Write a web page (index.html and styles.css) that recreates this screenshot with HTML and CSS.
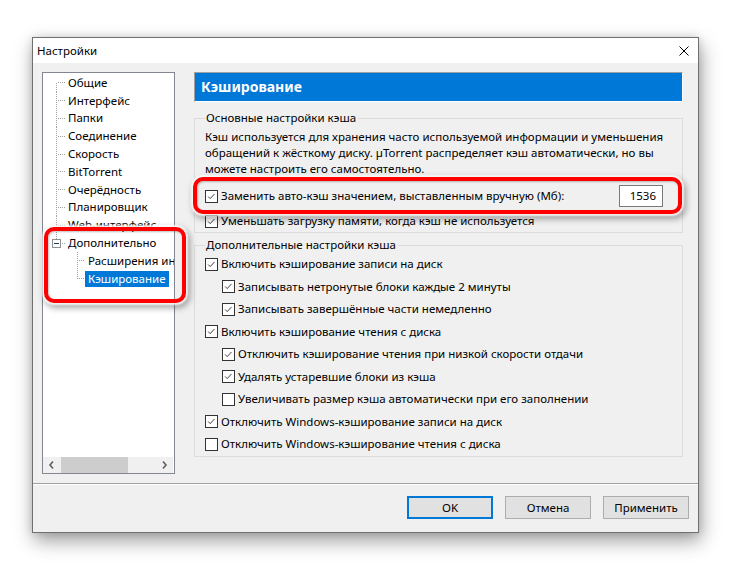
FILE: index.html
```html
<!DOCTYPE html>
<html lang="ru">
<head>
<meta charset="utf-8">
<title>Настройки</title>
<link rel="stylesheet" href="styles.css">
</head>
<body>
<div class="stage">
  <div class="dialog">
    <div class="titlebar">
      <span class="title">Настройки</span>
      <svg class="close" viewBox="0 0 10 10" width="10" height="10"><path d="M0.5 0.5 9.5 9.5 M9.5 0.5 0.5 9.5"/></svg>
    </div>
    <div class="main">
      <div class="tree">
        <div class="tree-list">
          <div class="node first"><span class="guide"></span><span class="label">Общие</span></div>
          <div class="node"><span class="guide"></span><span class="label">Интерфейс</span></div>
          <div class="node"><span class="guide"></span><span class="label">Папки</span></div>
          <div class="node"><span class="guide"></span><span class="label">Соединение</span></div>
          <div class="node"><span class="guide"></span><span class="label">Скорость</span></div>
          <div class="node"><span class="guide"></span><span class="label">BitTorrent</span></div>
          <div class="node"><span class="guide"></span><span class="label">Очерёдность</span></div>
          <div class="node"><span class="guide"></span><span class="label">Планировщик</span></div>
          <div class="node"><span class="guide"></span><span class="label">Web-интерфейс</span></div>
          <div class="node last"><span class="guide"><span class="minus"></span></span><span class="label">Дополнительно</span></div>
          <div class="node child"><span class="guide"></span><span class="label">Расширения интерфейса</span></div>
          <div class="node child lastchild"><span class="guide"></span><span class="label sel">Кэширование</span></div>
        </div>
        <div class="hscroll">
          <svg class="arrow" viewBox="0 0 17 16" width="17" height="16"><path d="M10 4.5 7 8 10 11.5"/></svg>
          <span class="thumb"></span>
          <span class="track-fill"></span>
          <svg class="arrow" viewBox="0 0 17 16" width="17" height="16"><path d="M7 4.5 10 8 7 11.5"/></svg>
        </div>
      </div>
      <div class="panel">
        <div class="panel-head">Кэширование</div>
        <fieldset class="group g1">
          <legend>Основные настройки кэша</legend>
          <p class="desc">Кэш используется для хранения часто используемой информации и уменьшения<br>обращений к жёсткому диску. µTorrent распределяет кэш автоматически, но вы<br>можете настроить его самостоятельно.</p>
          <div class="row r-main"><span class="cb on"><svg viewBox="0 0 13 13"><path d="M2.5 6.5 5 9 10 3.5"/></svg></span><span>Заменить авто-кэш значением, выставленным вручную (Мб):</span><span class="num">1536</span></div>
          <div class="row r-second"><span class="cb on"><svg viewBox="0 0 13 13"><path d="M2.5 6.5 5 9 10 3.5"/></svg></span><span>Уменьшать загрузку памяти, когда кэш не используется</span></div>
        </fieldset>
        <fieldset class="group g2">
          <legend>Дополнительные настройки кэша</legend>
          <div class="row"><span class="cb on"><svg viewBox="0 0 13 13"><path d="M2.5 6.5 5 9 10 3.5"/></svg></span><span>Включить кэширование записи на диск</span></div>
          <div class="row sub"><span class="cb on"><svg viewBox="0 0 13 13"><path d="M2.5 6.5 5 9 10 3.5"/></svg></span><span>Записывать нетронутые блоки каждые 2 минуты</span></div>
          <div class="row sub"><span class="cb on"><svg viewBox="0 0 13 13"><path d="M2.5 6.5 5 9 10 3.5"/></svg></span><span>Записывать завершённые части немедленно</span></div>
          <div class="row"><span class="cb on"><svg viewBox="0 0 13 13"><path d="M2.5 6.5 5 9 10 3.5"/></svg></span><span>Включить кэширование чтения с диска</span></div>
          <div class="row sub"><span class="cb on"><svg viewBox="0 0 13 13"><path d="M2.5 6.5 5 9 10 3.5"/></svg></span><span>Отключить кэширование чтения при низкой скорости отдачи</span></div>
          <div class="row sub"><span class="cb on"><svg viewBox="0 0 13 13"><path d="M2.5 6.5 5 9 10 3.5"/></svg></span><span>Удалять устаревшие блоки из кэша</span></div>
          <div class="row sub"><span class="cb"></span><span>Увеличивать размер кэша автоматически при его заполнении</span></div>
          <div class="row"><span class="cb on"><svg viewBox="0 0 13 13"><path d="M2.5 6.5 5 9 10 3.5"/></svg></span><span>Отключить Windows-кэширование записи на диск</span></div>
          <div class="row"><span class="cb"></span><span>Отключить Windows-кэширование чтения с диска</span></div>
        </fieldset>
      </div>
    </div>
    <div class="footer">
      <button class="btn default">OK</button>
      <button class="btn">Отмена</button>
      <button class="btn">Применить</button>
    </div>
  </div>
  <div class="mark mark-tree"></div>
  <div class="mark mark-row"></div>
</div>
</body>
</html>
```
FILE: styles.css
```css
* { box-sizing: border-box; }
body {
  margin: 0;
  background: #fff;
  font: 11.5px/16px "Noto Sans", "Open Sans", sans-serif;
  color: #000;
}
.stage {
  position: relative;
  width: 731px;
  height: 565px;
  padding: 37px 0 0 32px;
}
.dialog {
  width: 667px;
  height: 496px;
  border: 1px solid #707070;
  background: #f0f0f0;
  display: flex;
  flex-direction: column;
  box-shadow: 2px 8px 18px rgba(0, 0, 0, 0.38), 0 0 8px rgba(0, 0, 0, 0.12);
}
.titlebar {
  height: 25px;
  flex: none;
  background: #fff;
  display: flex;
  align-items: center;
  justify-content: space-between;
  padding-left: 4px;
}
.close { margin-right: 9px; }
.close path { stroke: #000; stroke-width: 1; fill: none; }

.main {
  height: 420px;
  flex: none;
  display: flex;
  gap: 19px;
  padding: 9px 14px 0 9px;
}
.tree {
  width: 133px;
  height: 402px;
  border: 1px solid #828790;
  background: #fff;
  display: flex;
  flex-direction: column;
}
.tree-list {
  flex: 1;
  overflow: hidden;
  padding-top: 1px;
}
.node {
  height: 17.8px;
  display: flex;
  align-items: center;
  padding-left: 13px;
  white-space: nowrap;
}
.guide {
  align-self: stretch;
  width: 10px;
  flex: none;
  display: flex;
  align-items: center;
  background:
    repeating-linear-gradient(#a0a0a0 0 1px, transparent 1px 2px) 0 0 / 1px 100% no-repeat,
    repeating-linear-gradient(90deg, #a0a0a0 0 1px, transparent 1px 2px) 2px 50% / 8px 1px no-repeat;
}
.node.first .guide {
  background:
    repeating-linear-gradient(#a0a0a0 0 1px, transparent 1px 2px) 0 100% / 1px 50% no-repeat,
    repeating-linear-gradient(90deg, #a0a0a0 0 1px, transparent 1px 2px) 2px 50% / 8px 1px no-repeat;
}
.node.last .guide {
  background:
    repeating-linear-gradient(#a0a0a0 0 1px, transparent 1px 2px) 0 0 / 1px 50% no-repeat,
    repeating-linear-gradient(90deg, #a0a0a0 0 1px, transparent 1px 2px) 2px 50% / 8px 1px no-repeat;
}
.minus {
  width: 9px;
  height: 9px;
  margin-left: -4px;
  border: 1px solid #919191;
  background: #fff linear-gradient(#1f3a60, #1f3a60) 50% 50% / 5px 1px no-repeat;
}
.node.child { padding-left: 34px; }
.node.child .guide {
  width: 8px;
  background:
    repeating-linear-gradient(#a0a0a0 0 1px, transparent 1px 2px) 0 0 / 1px 100% no-repeat,
    repeating-linear-gradient(90deg, #a0a0a0 0 1px, transparent 1px 2px) 2px 50% / 6px 1px no-repeat;
}
.node.child.lastchild .guide {
  background:
    repeating-linear-gradient(#a0a0a0 0 1px, transparent 1px 2px) 0 0 / 1px 50% no-repeat,
    repeating-linear-gradient(90deg, #a0a0a0 0 1px, transparent 1px 2px) 2px 50% / 6px 1px no-repeat;
}
.label {
  padding: 0 2px;
  line-height: 16px;
}
.node.child .label { padding: 0 3px; }
.label.sel {
  background: #0078d7;
  color: #fff;
}
.hscroll {
  height: 16px;
  flex: none;
  display: flex;
  background: #f0f0f0;
  margin-right: 1px;
}
.arrow { flex: none; }
.arrow path { fill: none; stroke: #606060; stroke-width: 1.6; }
.thumb {
  width: 67px;
  margin-left: 1px;
  background: #cdcdcd;
}
.track-fill { flex: 1; }

.panel { width: 489px; }
.panel-head {
  height: 30px;
  border-top: 1px solid #a0a0a0;
  border-left: 1px solid #a0a0a0;
  border-right: 1px solid #fff;
  border-bottom: 1px solid #fff;
  background: #0078d7;
  color: #fff;
  font-weight: bold;
  font-size: 14px;
  line-height: 27px;
  padding-left: 6px;
}
.group {
  margin: 8px 0 0;
  border: 1px solid #dcdcdc;
  padding: 3px 10px 0;
  min-width: 0;
}
.group legend {
  padding: 0 2px 0 1px;
  line-height: 16px;
}
.desc { margin: 0; line-height: 16px; }
.row {
  display: flex;
  align-items: center;
  height: 22px;
  white-space: nowrap;
}
.r-main { margin-top: 8px; }
.r-second { margin-top: 3px; }
.num {
  margin-left: auto;
  margin-right: 9px;
  width: 44px;
  height: 22px;
  border: 1px solid #7a7a7a;
  background: #fff;
  text-align: right;
  padding-right: 6px;
  line-height: 20px;
}
.g2 {
  margin-top: 4px;
  padding: 0 10px 0;
}
.g2 .row { height: 22.5px; }
.row.sub { padding-left: 17px; }
.cb {
  width: 13px;
  height: 13px;
  flex: none;
  border: 1px solid #333;
  background: #fff;
  margin-right: 3px;
  display: flex;
}
.cb svg { width: 11px; height: 11px; margin: 0; }
.cb path { fill: none; stroke: #333; stroke-width: 1.1; }

.footer {
  flex: 1;
  border-top: 1px solid #a0a0a0;
  box-shadow: inset 0 1px #fff;
  display: flex;
  justify-content: flex-end;
  align-items: flex-start;
  gap: 12px;
  padding: 12px 9px 0 0;
}
.btn {
  width: 86px;
  height: 23px;
  border: 1px solid #adadad;
  background: #e1e1e1;
  font: 11.5px/16px "Noto Sans", "Open Sans", sans-serif;
  color: #000;
  padding: 0;
}
.btn.default { border: 2px solid #0078d7; }

.mark {
  position: absolute;
  border: 4px solid #f00;
  border-radius: 10px;
  box-shadow: 0 0 2px 2px rgba(255, 255, 255, 0.85), 2px 3px 6px 2px rgba(0, 0, 0, 0.35), inset 1px 1px 2px rgba(0, 0, 0, 0.25);
}
.mark-tree { left: 44px; top: 227px; width: 142px; height: 76px; }
.mark-row { left: 193px; top: 177px; width: 489px; height: 37px; }
```
